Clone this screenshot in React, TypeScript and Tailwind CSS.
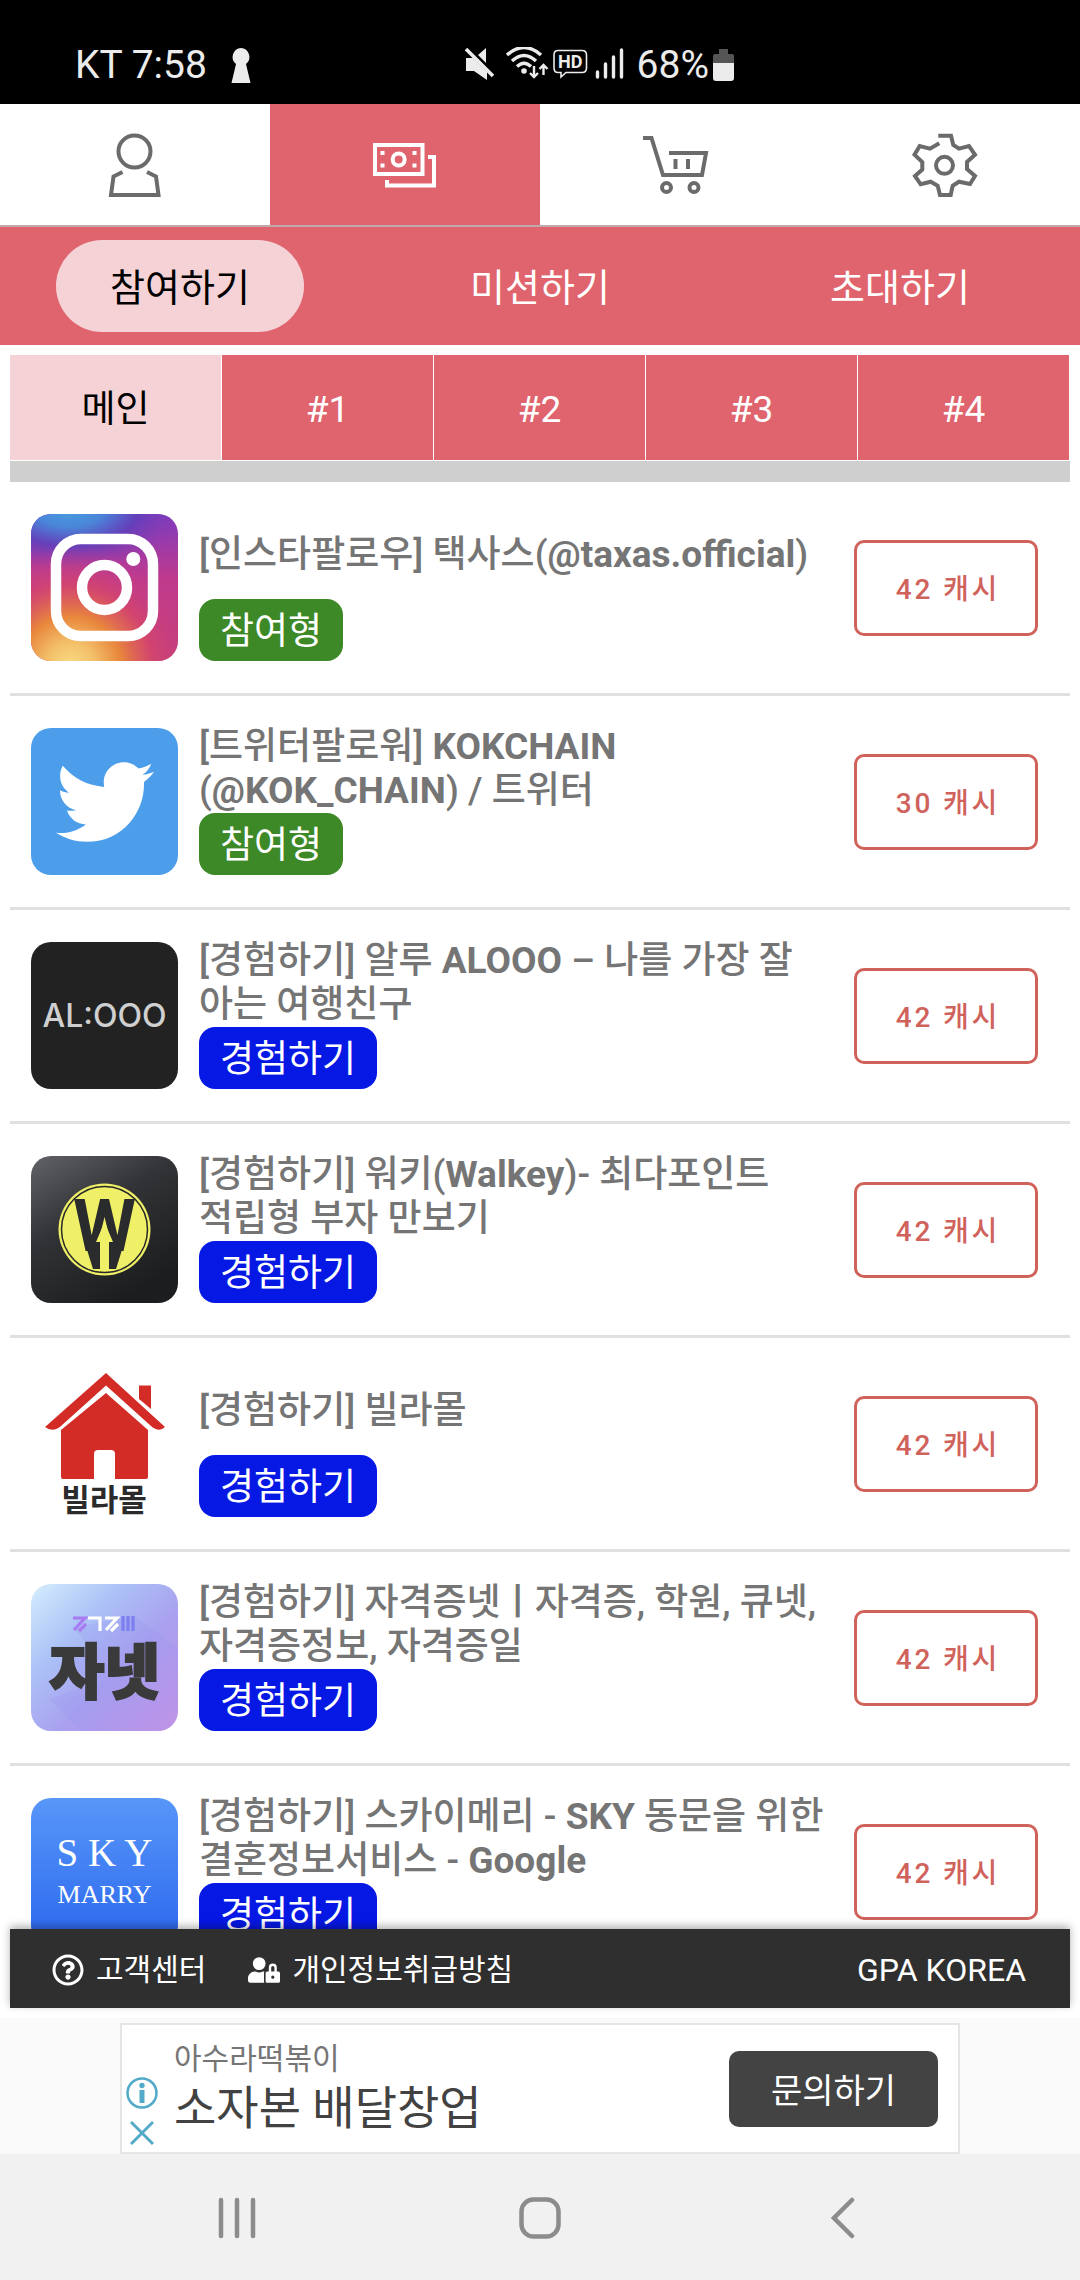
import type { ReactNode } from "react";
import { FaRegQuestionCircle, FaTwitter, FaUserLock } from "react-icons/fa";

type Offer = {
  id: number;
  title: string;
  kind: "참여형" | "경험하기";
  cash: number;
  logo: ReactNode;
};

const KIND_COLORS = {
  참여형: "bg-[#3d8927]",
  경험하기: "bg-[#0618e4]",
};

/* ---------- App logos ---------- */

function InstagramLogo() {
  return (
    <svg viewBox="0 0 147 147" className="w-full h-full">
      <defs>
        <linearGradient id="ig-base" x1="0" y1="0" x2="0" y2="1">
          <stop offset="0" stopColor="#7f3bc0" />
          <stop offset="0.45" stopColor="#c03a8c" />
          <stop offset="1" stopColor="#c63f78" />
        </linearGradient>
        <radialGradient id="ig-blue" cx="0.2" cy="-0.05" r="0.6" gradientTransform="scale(1.3 0.7)">
          <stop offset="0" stopColor="#479fe0" />
          <stop offset="0.3" stopColor="#4a85d8" />
          <stop offset="0.6" stopColor="#6040bb" stopOpacity="0.9" />
          <stop offset="1" stopColor="#8a3aae" stopOpacity="0" />
        </radialGradient>
        <radialGradient id="ig-warm" cx="0.27" cy="1.04" r="0.82">
          <stop offset="0" stopColor="#f9dd86" />
          <stop offset="0.2" stopColor="#f3c069" />
          <stop offset="0.42" stopColor="#e8863c" />
          <stop offset="0.68" stopColor="#d6466a" stopOpacity="0.8" />
          <stop offset="1" stopColor="#c03a8c" stopOpacity="0" />
        </radialGradient>
      </defs>
      <rect width="147" height="147" fill="url(#ig-base)" />
      <rect width="147" height="147" fill="url(#ig-blue)" />
      <rect width="147" height="147" fill="url(#ig-warm)" />
      <g fill="none" stroke="#fff" strokeWidth="10.5">
        <rect x="25" y="25" width="97" height="97" rx="25" />
        <circle cx="73.5" cy="73.5" r="22.5" />
      </g>
      <circle cx="102.3" cy="45" r="7" fill="#fff" />
    </svg>
  );
}

function TwitterLogo() {
  return (
    <div className="flex w-full h-full items-center justify-center bg-[#4c9dea] text-white">
      <FaTwitter className="w-[98px] h-[98px]" />
    </div>
  );
}

function AloooLogo() {
  return (
    <div className="flex w-full h-full items-center justify-center bg-[#222] font-[Inter,sans-serif] font-medium text-[32px] text-[#d0d0d0]">
      AL:OOO
    </div>
  );
}

function WalkeyLogo() {
  return (
    <svg viewBox="0 0 147 147" className="w-full h-full">
      <defs>
        <linearGradient id="wk-bg" x1="0" y1="0" x2="0.6" y2="1">
          <stop offset="0" stopColor="#616366" />
          <stop offset="0.45" stopColor="#323336" />
          <stop offset="1" stopColor="#1c1d1f" />
        </linearGradient>
      </defs>
      <rect width="147" height="147" fill="url(#wk-bg)" />
      <circle cx="73.5" cy="73.5" r="46" fill="#eff067" />
      <circle cx="73.5" cy="73.5" r="43" fill="none" stroke="#27282a" strokeWidth="1.5" />
      <text
        x="73.5"
        y="95"
        textAnchor="middle"
        className="font-[Roboto,sans-serif] font-bold text-[72px]"
        fill="#2a2b2d"
      >
        W
      </text>
      {/* dark stem that carries the arrow */}
      <path d="M53 84 H94 L85 113 H62 Z" fill="#2a2b2d" />
      <path d="M73.5 66 L82 86 H78 V114 H69 V86 H65 Z" fill="#eff067" />
    </svg>
  );
}

function VillaMallLogo() {
  return (
    <svg viewBox="0 0 147 147" className="w-full h-full">
      <g fill="#d32c26">
        <path d="M75 3 L134 57 Q128 63 120 56 L75 15.5 L30 56 Q22 63 14 57 Z" />
        <path d="M108 15.5 H120 V39 L108 29 Z" />
        <path d="M75 23 L117 60 V107 Q117 109 115 109 H84 V84 Q84 80 80 80 H67 Q63 80 63 84 V109 H32 Q30 109 30 107 V60 Z" />
      </g>
      <text
        x="73"
        y="141"
        textAnchor="middle"
        className="font-['Noto_Sans_CJK_KR',sans-serif] font-bold text-[31px]"
        fill="#2b2b2b"
      >
        빌라몰
      </text>
    </svg>
  );
}

function JanetLogo() {
  return (
    <svg viewBox="0 0 147 147" className="w-full h-full">
      <defs>
        <linearGradient id="jn-bg" x1="0" y1="0" x2="1" y2="1">
          <stop offset="0" stopColor="#d6eefd" />
          <stop offset="0.3" stopColor="#acc3f7" />
          <stop offset="0.6" stopColor="#a9a0ef" />
          <stop offset="1" stopColor="#cb93e5" />
        </linearGradient>
      </defs>
      <rect width="147" height="147" fill="url(#jn-bg)" />
      <path d="M103 32 L147 64 V147 H50 L18 115 L62 100 L20 62 H58 L42 44 Z" fill="#8f8ff0" fillOpacity="0.2" />
      {/* small word mark */}
      <g fill="none" strokeWidth="3.2">
        <path d="M42 34 H54 L43 46 M48 47 L55 40" stroke="#a87bf0" />
        <path d="M57 34 H69 V47 M74 34 H86 L75 46 M80 47 L87 40" stroke="#fff" />
        <path d="M92 32 V47 M97 32 V47 M102 32 V47" stroke="#7d7ff0" />
      </g>
      <text
        x="73.5"
        y="110"
        textAnchor="middle"
        className="font-['Noto_Sans_CJK_KR',sans-serif] font-black text-[60px]"
        fill="#3a3a3a"
        stroke="#3a3a3a"
        strokeWidth="2"
      >
        자넷
      </text>
    </svg>
  );
}

function SkyMarryLogo() {
  return (
    <div className="flex flex-col w-full h-full items-center bg-linear-to-b from-[#5896f8] to-[#2c67ee] pt-[32px] font-['Liberation_Serif',serif] text-white">
      <span className="text-[39px] leading-[46px]">S K Y</span>
      <span className="text-[26px] leading-[38px]">MARRY</span>
    </div>
  );
}

const OFFERS: Offer[] = [
  { id: 1, title: "[인스타팔로우] 택사스(@taxas.official)", kind: "참여형", cash: 42, logo: <InstagramLogo /> },
  { id: 2, title: "[트위터팔로워] KOKCHAIN (@KOK_CHAIN) / 트위터", kind: "참여형", cash: 30, logo: <TwitterLogo /> },
  { id: 3, title: "[경험하기] 알루 ALOOO – 나를 가장 잘 아는 여행친구", kind: "경험하기", cash: 42, logo: <AloooLogo /> },
  { id: 4, title: "[경험하기] 워키(Walkey)- 최다포인트 적립형 부자 만보기", kind: "경험하기", cash: 42, logo: <WalkeyLogo /> },
  { id: 5, title: "[경험하기] 빌라몰", kind: "경험하기", cash: 42, logo: <VillaMallLogo /> },
  { id: 6, title: "[경험하기] 자격증넷ㅣ자격증, 학원, 큐넷, 자격증정보, 자격증일", kind: "경험하기", cash: 42, logo: <JanetLogo /> },
  { id: 7, title: "[경험하기] 스카이메리 - SKY 동문을 위한 결혼정보서비스 - Google", kind: "경험하기", cash: 42, logo: <SkyMarryLogo /> },
];

/* ---------- Navigation icons ---------- */

function NavIcon({ children }: { children: ReactNode }) {
  return (
    <svg viewBox="0 0 64 64" className="w-16 h-16 overflow-visible" fill="none" stroke="currentColor" strokeWidth="4">
      {children}
    </svg>
  );
}

const NAV_ITEMS = [
  {
    label: "내 정보",
    active: false,
    icon: (
      <NavIcon>
        <circle cx="31.5" cy="18.5" r="16" />
        <path d="M19.5 39 L10.5 43.5 L8 62 H55.5 L53 43.5 L44 39" />
      </NavIcon>
    ),
  },
  {
    label: "캐시",
    active: true,
    icon: (
      <NavIcon>
        <rect x="2" y="12" width="47.5" height="29" />
        <circle cx="25.7" cy="26.5" r="6" />
        <path d="M7.5 20 H11.5 M7.5 32.5 H11.5 M39.5 20 H43.5 M39.5 32.5 H43.5" />
        <path d="M55 24 H61 V52.5 H14 V47" />
      </NavIcon>
    ),
  },
  {
    label: "상점",
    active: false,
    icon: (
      <NavIcon>
        <path d="M0 5 H8.5 L20 42 H59 L63 20 H26" />
        <path d="M32.5 26 V36 M45 26 V36" />
        <circle cx="23.5" cy="54.5" r="4.5" />
        <circle cx="51" cy="54.5" r="4.5" />
      </NavIcon>
    ),
  },
  {
    label: "설정",
    active: false,
    icon: (
      <NavIcon>
        <path d="M25.3 2.7 H38 L40.3 12 L46 15.7 L56 13 L62 21.7 L54 29 V36 L62 43 L57 51 L46 48.7 L39.7 52.7 L37.7 62 H27 L24.7 52.7 L17.7 48.7 L7.7 51.3 L2 43 L9.3 36.5 V29 L1.5 21.7 L6.7 13 L17 15.7 L26.3 10.3" />
        <circle cx="31.5" cy="32.3" r="8.5" />
      </NavIcon>
    ),
  },
];

function StatusBar() {
  return (
    <header className="flex items-center bg-black h-[104px] pt-[26px] pl-[75px] pr-[346px] text-[39px] leading-none text-[#ececec]">
      <div className="flex flex-1 items-center gap-6">
        <span>KT 7:58</span>
        <svg viewBox="0 0 20 35" className="w-5 h-[35px]" fill="currentColor">
          <path d="M10 0 A9 9 0 0 1 15 16 L19.5 35 H0.5 L5 16 A9 9 0 0 1 10 0 Z" />
        </svg>
      </div>
      <svg viewBox="0 0 160 36" className="w-[160px] h-9 mr-3" fill="none" stroke="currentColor">
        {/* muted speaker */}
        <path d="M1 11 H8 L22 25 V33 L9 24 H1 Z M21 1 V16 L13 8 Z" fill="currentColor" stroke="none" />
        <path d="M1 2 L28 29" strokeWidth="3.6" />
        {/* wifi with traffic arrows */}
        <g strokeWidth="3.4">
          <path d="M42 8 Q59 -7 76 8" />
          <path d="M47 14 Q59 3 71 14" />
          <path d="M52 19.5 Q59 13 66 19.5" />
        </g>
        <circle cx="59" cy="24" r="2.8" fill="currentColor" stroke="none" />
        <path d="M69 19 V30 M65 26 L69 30 L73 26 M78.5 28 V18 M74.5 22 L78.5 18 L82.5 22" strokeWidth="2.4" />
        {/* HD voice */}
        <path d="M93 3.5 H117 Q121.5 3.5 121.5 8 V21 Q121.5 25.5 117 25.5 H101 L96 30 V25.5 H93 Q89 25.5 89 21 V8 Q89 3.5 93 3.5 Z" strokeWidth="1.6" />
        <text x="105.3" y="21" textAnchor="middle" className="font-bold text-[18px]" fill="currentColor" stroke="none">
          HD
        </text>
        {/* signal */}
        <path d="M132.5 25 V30 M140.5 17 V30 M148.5 10 V30 M156.5 3 V30" strokeWidth="3.4" strokeLinecap="round" />
      </svg>
      <span>68%</span>
      <svg viewBox="0 0 21 32" className="w-[21px] h-8 ml-1">
        <path d="M6 0 H15 V5 H19 Q21 5 21 7 V14 H0 V7 Q0 5 2 5 H6 Z" fill="#555" />
        <path d="M0 14 H21 V29 Q21 32 18 32 H3 Q0 32 0 29 Z" fill="#ececec" />
      </svg>
    </header>
  );
}

// Latin words in a title are set heavier than the Korean around them
function OfferTitle({ title }: { title: string }) {
  return (
    <h2 className="font-medium leading-[44px] break-keep text-[#757575]">
      {title.split(/([@A-Za-z_.]+)/).map((part, i) => (i % 2 ? <b key={i} className="font-bold">{part}</b> : part))}
    </h2>
  );
}

function OfferRow({ offer }: { offer: Offer }) {
  return (
    <li className="flex items-end pt-[29px] pb-8 pl-[21px] pr-8 border-b-3 border-[#e0e0e0]">
      <div className="w-[147px] h-[147px] shrink-0 rounded-[20px] overflow-hidden">{offer.logo}</div>
      <div className="flex-1 min-w-0 ml-[21px]">
        <div className="flex items-center h-[88px]">
          <OfferTitle title={offer.title} />
        </div>
        <span className={`inline-flex items-center h-[62px] pt-1 px-[21px] rounded-[16px] text-white ${KIND_COLORS[offer.kind]}`}>
          {offer.kind}
        </span>
      </div>
      <button
        type="button"
        className="w-[184px] h-[96px] shrink-0 mb-[25px] pt-1 pl-1 rounded-[10px] border-3 border-[#d0625c] text-[28px] font-medium tracking-widest text-[#d0625c]"
      >
        {offer.cash} 캐시
      </button>
    </li>
  );
}

export default function App() {
  return (
    <div className="flex flex-col h-screen bg-white text-[37px] leading-[44px] [font-family:Roboto,'Noto_Sans_CJK_KR',sans-serif]">
      <StatusBar />

      <nav className="grid grid-cols-4 h-[123px] shrink-0 border-b-2 border-[#c1a9ab]">
        {NAV_ITEMS.map((item) => (
          <button
            key={item.label}
            type="button"
            aria-label={item.label}
            className={`flex items-center justify-center ${item.active ? "bg-[#df646e] text-white" : "text-[#6b6b6b]"}`}
          >
            {item.icon}
          </button>
        ))}
      </nav>

      <div className="grid grid-cols-3 items-center justify-items-center h-[118px] shrink-0 bg-[#df646e] text-[38px] text-white">
        <button type="button" className="h-[92px] pt-1 px-[54px] rounded-full bg-[#f5d2d5] text-black">
          참여하기
        </button>
        <button type="button" className="h-[92px] pt-1 px-[54px]">미션하기</button>
        <button type="button" className="h-[92px] pt-1 px-[54px]">초대하기</button>
      </div>

      <main className="flex flex-col flex-1 min-h-0 px-2.5 pt-2.5">
        <div className="grid grid-cols-5 h-[105px] shrink-0">
          {["메인", "#1", "#2", "#3", "#4"].map((tab, i) => (
            <button
              key={tab}
              type="button"
              className={`pt-1 border-r border-white ${i === 0 ? "bg-[#f5d2d5] text-black" : "bg-[#df646e] text-white"}`}
            >
              {tab}
            </button>
          ))}
        </div>
        <div className="h-[21px] shrink-0 mt-px bg-[#cfcfcf]" />

        <ul className="flex-1 min-h-0 overflow-hidden">
          {OFFERS.map((offer) => (
            <OfferRow key={offer.id} offer={offer} />
          ))}
        </ul>

        <footer className="relative flex items-center h-[79px] shrink-0 pt-0.5 pl-[42px] pr-11 bg-[#2f2f2f] text-[30px] text-white shadow-[0_-3px_8px_rgba(0,0,0,0.3)]">
          <a href="#help" className="flex items-center gap-3">
            <FaRegQuestionCircle className="w-8 h-8" />
            고객센터
          </a>
          <a href="#privacy" className="flex items-center gap-3 ml-[42px]">
            <FaUserLock className="w-8 h-8" />
            개인정보취급방침
          </a>
          <span className="ml-auto text-[32px]">GPA KOREA</span>
        </footer>
      </main>

      {/* Ad banner */}
      <aside className="flex justify-center h-[136px] shrink-0 mt-2.5 pt-[5px] bg-[#fafafa]">
        <div className="flex items-center w-[840px] pl-1 pr-5 border-2 border-[#e5e5e5] bg-white">
          <div className="flex flex-col self-end items-center gap-[11px] w-8 pb-1.5 text-[#52aac8]">
            <svg viewBox="0 0 32 32" className="w-8 h-8" fill="none" stroke="currentColor" strokeWidth="2.5">
              <circle cx="16" cy="16" r="14.5" />
              <path d="M16 13 V26" strokeWidth="5" />
              <circle cx="16" cy="8.5" r="2.7" fill="currentColor" stroke="none" />
            </svg>
            <svg viewBox="0 0 24 26" className="w-6 h-[26px]" stroke="currentColor" strokeWidth="3">
              <path d="M1 2 L23 24 M23 2 L1 24" />
            </svg>
          </div>
          <div className="flex-1 ml-4">
            <p className="text-[30px] leading-[38px] text-[#757575]">아수라떡볶이</p>
            <p className="text-[46px] leading-[60px] text-[#424242]">소자본 배달창업</p>
          </div>
          <button type="button" className="h-[76px] pt-1 px-[42px] rounded-[10px] bg-[#434343] text-[34px] text-white">
            문의하기
          </button>
        </div>
      </aside>

      {/* System navigation */}
      <div className="grid grid-cols-3 h-[126px] shrink-0 pt-0.5 px-[86px] bg-[#f1f1f1] text-[#8c8c8c]">
        <button type="button" aria-label="최근 앱" className="flex items-center justify-center">
          <svg viewBox="0 0 38 42" className="w-[38px] h-[42px]" stroke="currentColor" strokeWidth="4.5" strokeLinecap="round">
            <path d="M3 3 V39 M19 3 V39 M35 3 V39" />
          </svg>
        </button>
        <button type="button" aria-label="홈" className="flex items-center justify-center">
          <svg viewBox="0 0 42 42" className="w-[42px] h-[42px]" fill="none" stroke="currentColor" strokeWidth="4.5">
            <rect x="2.5" y="2.5" width="37" height="37" rx="12" />
          </svg>
        </button>
        <button type="button" aria-label="뒤로" className="flex items-center justify-center">
          <svg viewBox="0 0 24 42" className="w-6 h-[42px]" fill="none" stroke="currentColor" strokeWidth="4.5" strokeLinecap="round">
            <path d="M21 3 L3 21 L21 39" />
          </svg>
        </button>
      </div>
    </div>
  );
}
